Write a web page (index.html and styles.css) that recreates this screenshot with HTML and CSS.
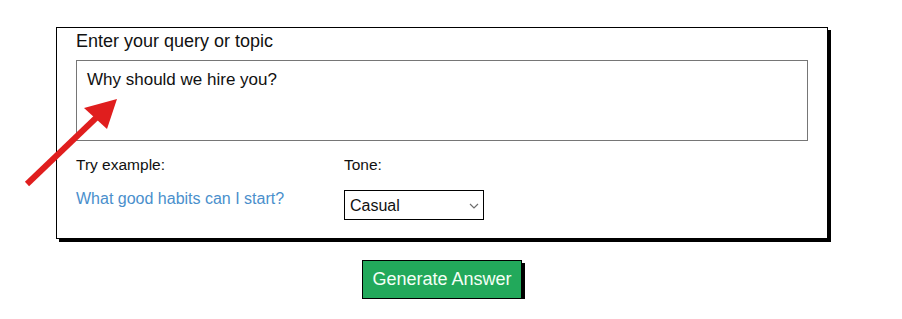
FILE: index.html
```html
<!DOCTYPE html>
<html lang="en">
<head>
<meta charset="utf-8">
<title>Query</title>
<link rel="stylesheet" href="styles.css">
</head>
<body>
<div class="page">
  <div class="card">
    <label class="field-label" for="q">Enter your query or topic</label>
    <textarea id="q" class="query">Why should we hire you?</textarea>
    <div class="options">
      <div class="col col-examples">
        <div class="opt-label">Try example:</div>
        <a class="example" href="#">What good habits can I start?</a>
      </div>
      <div class="col">
        <div class="opt-label">Tone:</div>
        <div class="select-wrap">
          <select class="tone">
            <option>Casual</option>
            <option>Formal</option>
          </select>
          <svg class="chev" width="10" height="6" viewBox="0 0 10 6"><path d="M1 1 L5 5 L9 1" fill="none" stroke="#6e6e6e" stroke-width="1.2"/></svg>
        </div>
      </div>
    </div>
  </div>
  <div class="actions">
    <button class="generate">Generate Answer</button>
  </div>
</div>
<svg class="arrow" width="140" height="200" viewBox="0 0 140 200">
  <line x1="27" y1="184" x2="97" y2="117" stroke="#e01e1e" stroke-width="6"/>
  <polygon points="117,99 84,108 107,129" fill="#e01e1e"/>
</svg>
</body>
</html>
```
FILE: styles.css
```css
html, body {
  margin: 0;
  padding: 0;
  background: #fff;
}
body {
  font-family: "Liberation Sans", Arial, sans-serif;
  color: #111;
  position: relative;
}
.page {
  padding-top: 27px;
  padding-left: 56px;
  width: 772px;
}
.card {
  border: 1px solid #000;
  box-shadow: 3px 3px 0 #000;
  padding: 3px 19px 18px 19px;
  width: 732px;
}
.field-label {
  display: block;
  font-size: 18px;
  line-height: 21px;
  margin-bottom: 8px;
}
.query {
  display: block;
  box-sizing: border-box;
  width: 732px;
  height: 81px;
  margin: 0;
  border: 1px solid #767676;
  border-radius: 0;
  padding: 9px 10px;
  font-family: "Liberation Sans", Arial, sans-serif;
  font-size: 17px;
  line-height: 20px;
  color: #111;
  resize: none;
  outline: none;
}
.options {
  display: flex;
  margin-top: 15px;
}
.col-examples {
  width: 268px;
}
.opt-label {
  font-size: 15.5px;
  line-height: 18px;
  margin-bottom: 16px;
}
.example {
  display: block;
  font-size: 16px;
  line-height: 18px;
  color: #4a8fcc;
  text-decoration: none;
}
.select-wrap {
  position: relative;
  width: 140px;
  height: 30px;
}
.tone {
  appearance: none;
  -webkit-appearance: none;
  box-sizing: border-box;
  width: 140px;
  height: 30px;
  margin: 0;
  border: 1px solid #000;
  border-radius: 0;
  background: #fff;
  padding: 0 0 0 5px;
  font-family: "Liberation Sans", Arial, sans-serif;
  font-size: 16px;
  color: #111;
  outline: none;
}
.chev {
  position: absolute;
  left: 125px;
  top: 13px;
  pointer-events: none;
}
.actions {
  display: flex;
  justify-content: center;
  margin-top: 21px;
}
.generate {
  box-sizing: border-box;
  width: 160px;
  height: 39px;
  border: 1px solid #000;
  border-radius: 0;
  box-shadow: 3px 3px 0 #000;
  background: #22a95b;
  color: #f4fff6;
  font-family: "Liberation Sans", Arial, sans-serif;
  font-size: 18px;
  line-height: 21px;
  padding: 8px 0;
}
.arrow {
  position: absolute;
  left: 0;
  top: 0;
}
```
